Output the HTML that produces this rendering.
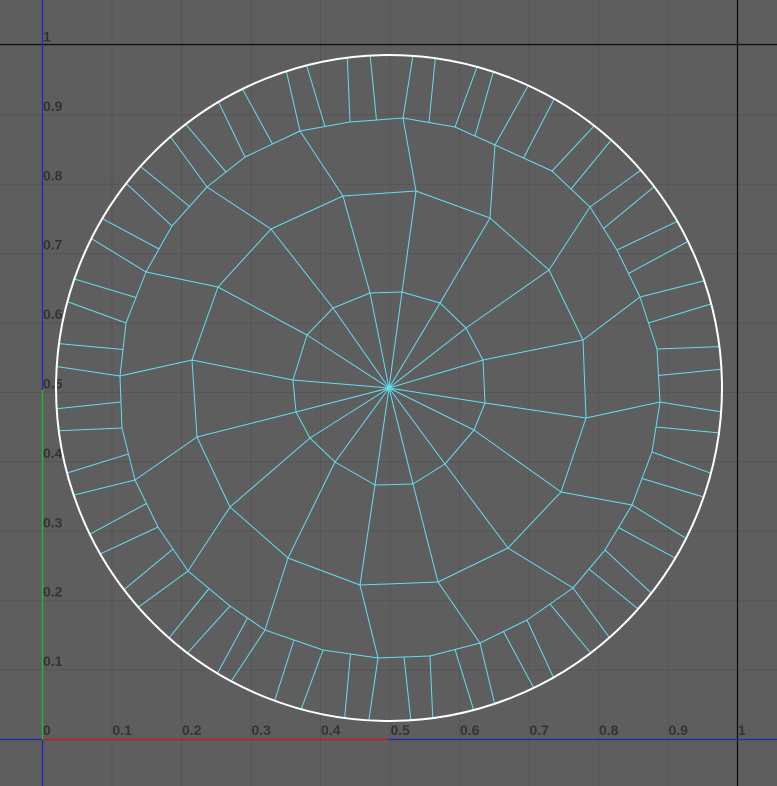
<!DOCTYPE html>
<html><head><style>
html,body{margin:0;padding:0;background:#5e5e5e;}
svg{display:block}
text{font-family:"Liberation Sans",sans-serif;font-weight:bold;font-size:14px;fill:#333}
</style></head><body>
<svg id="s" width="777" height="786" xmlns="http://www.w3.org/2000/svg">
<rect width="777" height="786" fill="#5e5e5e"/>
<g id="grid" stroke="#555" stroke-width="1"></g>
<g id="lab"></g>
<line x1="0" y1="44.5" x2="777" y2="44.5" stroke="#111" stroke-width="1.3"/>
<line x1="737.5" y1="0" x2="737.5" y2="786" stroke="#111" stroke-width="1.3"/>
<line x1="42.5" y1="0" x2="42.5" y2="786" stroke="#2323c8" stroke-width="1.3"/>
<line x1="0" y1="739.5" x2="777" y2="739.5" stroke="#2323c8" stroke-width="1.3"/>
<line x1="42.5" y1="739.5" x2="389" y2="739.5" stroke="#c02020" stroke-width="1.5"/>
<line x1="42.5" y1="739.5" x2="42.5" y2="390" stroke="#20c020" stroke-width="1.5"/>
<g id="mesh" stroke="#66dcf0" stroke-width="1" fill="none"></g>
<circle cx="389" cy="388" r="333" fill="none" stroke="#fff" stroke-width="2"/>
</svg>
<script>
var NS="http://www.w3.org/2000/svg";
function el(p,t,a){var e=document.createElementNS(NS,t);for(var k in a)e.setAttribute(k,a[k]);p.appendChild(e);return e;}
var g=document.getElementById('grid'),lab=document.getElementById('lab'),m=document.getElementById('mesh');
for(var i=0;i<=11;i++){var x=42.5+69.5*i;el(g,'line',{x1:x,y1:0,x2:x,y2:786});var y=739.5-69.4*i;el(g,'line',{x1:0,y1:y,x2:777,y2:y});}
var L=['0','0.1','0.2','0.3','0.4','0.5','0.6','0.7','0.8','0.9','1'];
for(var i=0;i<=10;i++){var t=el(lab,'text',{x:43+69.5*i,y:735});t.textContent=L[i];
 if(i>0){var t2=el(lab,'text',{x:43,y:739.5-69.4*i-4});t2.textContent=L[i];}}
var C=[389,388],R=333;
var inner=[[293,380],[296,412],[310,438],[335,462],[375,485],[413,484],[445,464],[474,430],[485,403],[483,360],[466,328],[440,303],[402,292],[370,293],[333,308],[307,335]];
var mid=[[192,360],[197,437],[230,507],[288,558],[360,585],[438,582],[508,548],[561,492],[586,418],[583,340],[549,270],[490,218],[416,191],[343,196],[271,229],[218,287]];
var outer=[[120,376],[122,428],[135,480],[158,527],[188,571],[230,606],[265,630],[323,650],[378,658],[430,656],[480,643],[527,620],[573,588],[605,550],[632,505],[652,452],[660,402],[657,349],[640,297],[617,250],[590,207],[552,171],[495,145],[455,127],[403,118],[350,122],[300,131],[245,157],[207,187],[172,226],[146,272],[126,323]];
function ln(a,b){el(m,'line',{x1:a[0],y1:a[1],x2:b[0],y2:b[1]});}
function ring(r){for(var i=0;i<r.length;i++)ln(r[i],r[(i+1)%r.length]);}
ring(inner);ring(mid);ring(outer);
for(var i=0;i<16;i++){ln(C,inner[i]);ln(inner[i],mid[i]);ln(mid[i],outer[2*i]);}
function rim(p,o){var dx=p[0]-C[0],dy=p[1]-C[1],d=Math.sqrt(dx*dx+dy*dy);var a=Math.atan2(dy,dx)+(o||0);return [C[0]+Math.cos(a)*R,C[1]+Math.sin(a)*R];}
for(var i=0;i<32;i++){var a=outer[i],b=outer[(i+1)%32];ln(a,rim(a,0.02));
 var mp=[(a[0]+b[0])/2,(a[1]+b[1])/2];ln(mp,rim(mp,-0.01));}
</script>
</body></html>
